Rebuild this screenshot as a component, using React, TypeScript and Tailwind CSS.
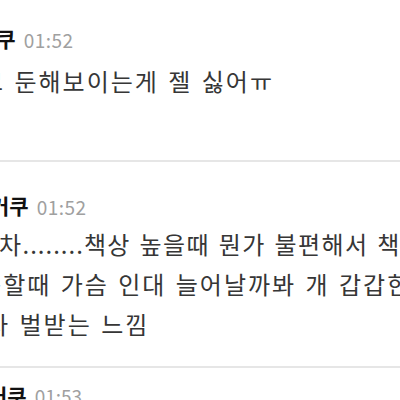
const font = { fontFamily: '"Noto Sans CJK KR", "Noto Sans", sans-serif' };

type Line = { text: string; shift: string; track?: string };

type Comment = {
  name: string;
  time: string;
  shift: string;
  lines: Line[];
  top: string;
  gap: string;
  bottom: string;
};

const comments: Comment[] = [
  {
    name: "커쿠",
    time: "01:52",
    shift: "ml-[-23px]",
    lines: [{ text: "고 둔해보이는게 젤 싫어ㅠ", shift: "ml-[-19px]" }],
    top: "pt-[25px]",
    gap: "mt-2",
    bottom: "pb-[59px]",
  },
  {
    name: "커쿠",
    time: "01:52",
    shift: "ml-[-10px]",
    lines: [
      {
        text: "차|........|책상 높을때 뭔가 불편해서 책상",
        shift: "ml-[-1px]",
        track: "tracking-[1.4px]",
      },
      { text: "운동할때 가슴 인대 늘어날까봐 개 갑갑한", shift: "ml-[-45px]" },
      { text: "혼자 벌받는 느낌", shift: "ml-[-38px]" },
    ],
    top: "pt-[30px]",
    gap: "mt-[4px]",
    bottom: "pb-[22px]",
  },
];

// the dots in the source font sit tighter than the hangul
function LineText({ text }: { text: string }) {
  const parts = text.split("|");
  return (
    <>
      {parts.map((p, i) =>
        p.startsWith(".") ? (
          <span key={i} className="tracking-[1px]">
            {p}
          </span>
        ) : (
          <span key={i}>{p}</span>
        )
      )}
    </>
  );
}

function CommentBlock({ c }: { c: Comment }) {
  return (
    <div className={`border-b-2 border-[#e6e6e6] ${c.top} ${c.bottom}`}>
      <div className={`flex items-center h-7 gap-[8px] whitespace-nowrap ${c.shift}`}>
        <span className="text-[21px] font-bold text-[#111]">{c.name}</span>
        <span className="text-[19px] text-[#a0a0a0] tracking-[0.5px] pt-[2px]">{c.time}</span>
      </div>
      <div className={c.gap}>
        {c.lines.map((l, i) => (
          <div
            key={i}
            className={`h-10 leading-10 text-[24px] ${l.track ?? "tracking-[2px]"} [word-spacing:2px] text-[#363636] whitespace-nowrap ${l.shift}`}
          >
            <LineText text={l.text} />
          </div>
        ))}
      </div>
    </div>
  );
}

export default function App() {
  return (
    <div className="w-[400px] h-[400px] overflow-hidden bg-white" style={font}>
      {comments.map((c, i) => (
        <CommentBlock key={i} c={c} />
      ))}
      <div className="pt-[28px] flex items-center h-7 gap-[8px] ml-[-12px] whitespace-nowrap">
        <span className="text-[21px] font-bold text-[#111]">커쿠</span>
        <span className="text-[19px] text-[#a0a0a0]">01:53</span>
      </div>
    </div>
  );
}
